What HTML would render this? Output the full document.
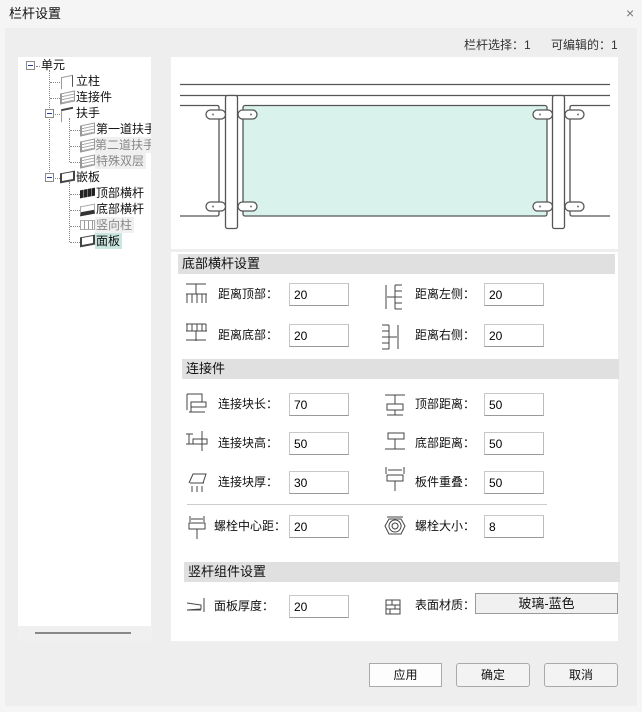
<!DOCTYPE html>
<html><head><meta charset="utf-8"><style>
*{margin:0;padding:0;box-sizing:border-box}
body{width:642px;height:712px;background:#f5f5f5;font-family:"Liberation Sans","Noto Sans CJK SC",sans-serif;font-size:12px;color:#111;position:relative;overflow:hidden}
.a{position:absolute}
.t{white-space:nowrap;line-height:16px}
.inp{position:absolute;width:60px;height:23px;background:#fff;border:1px solid #c8c8c8;border-bottom-color:#999;border-right-color:#bbb;font-size:12px;padding:3px 0 0 4px;line-height:16px;color:#000}
.hd{position:absolute;height:20px;background:#e0e0e0;font-size:13px;line-height:20px;padding-left:4px}
.btn{position:absolute;height:24px;border:1px solid #aaa;border-radius:3px;background:#f3f3f3;text-align:center;line-height:22px;font-size:12px}
.box{position:absolute;width:9px;height:9px;border:1px solid #8a8a8a;background:#fff}
.box:after{content:"";position:absolute;left:1px;top:3px;width:5px;height:1px;background:#2a3a9a}
.dv{position:absolute;border-left:1px dotted #888}
.dh{position:absolute;border-top:1px dotted #888;height:0}
.ic{position:absolute;width:15px;height:11px;border:1px solid #999;border-left-width:2px;background:repeating-linear-gradient(180deg,#fff 0 2px,#aaa 2px 3px);transform:skewY(-12deg)}
</style></head><body>
<div class="a t" style="left:9px;top:6px;font-size:13px">栏杆设置</div>
<div class="a t" style="left:626px;top:5px;font-size:14px;color:#777">×</div>
<div class="a" style="left:5px;top:28px;width:632px;height:678px;background:#eeeeee"></div>
<div class="a t" style="left:464px;top:37px;color:#333">栏杆选择：1</div>
<div class="a t" style="left:551px;top:37px;color:#333">可编辑的：1</div>

<!-- tree -->
<div class="a" style="left:18px;top:626px;width:134px;height:15px;background:#f0f0f0"></div>
<div class="a" style="left:35px;top:632px;width:96px;height:2px;background:#888"></div>
<div class="a" style="left:18px;top:57px;width:133px;height:569px;background:#fff;overflow:hidden">
<div class="a" style="left:-18px;top:-57px;width:200px;height:700px">
<div class="dv" style="left:49px;top:70px;height:108px"></div>
<div class="dv" style="left:69px;top:118px;height:44px"></div>
<div class="dv" style="left:69px;top:182px;height:60px"></div>
<div class="box" style="left:26px;top:61px"></div>
<div class="dh" style="left:36px;top:66px;width:4px"></div>
<div class="a t" style="left:41px;top:57px">单元</div>
<div class="dh" style="left:50px;top:82px;width:10px"></div>
<div class="a" style="left:61px;top:76px;width:12px;height:12px;border-left:1px solid #999;border-top:1px solid #999;border-right:1px solid #555;transform:skewY(-12deg)"></div>
<div class="a t" style="left:76px;top:73px">立柱</div>
<div class="dh" style="left:50px;top:98px;width:10px"></div>
<div class="ic" style="left:60px;top:92px"></div>
<div class="a t" style="left:76px;top:89px">连接件</div>
<div class="box" style="left:45px;top:109px"></div>
<div class="dh" style="left:55px;top:114px;width:5px"></div>
<div class="a" style="left:61px;top:108px;width:12px;height:13px;border-left:1px solid #999;border-top:2px solid #444;transform:skewY(-12deg)"></div>
<div class="a t" style="left:76px;top:105px">扶手</div>
<div class="dh" style="left:70px;top:130px;width:10px"></div>
<div class="ic" style="left:80px;top:124px"></div>
<div class="a t" style="left:96px;top:121px">第一道扶手</div>
<div class="dh" style="left:70px;top:146px;width:10px"></div>
<div class="ic" style="left:80px;top:140px"></div>
<div class="a t" style="left:95px;top:137px;color:#888;background:#f0f0f0;padding-right:2px">第二道扶手</div>
<div class="dh" style="left:70px;top:162px;width:10px"></div>
<div class="ic" style="left:80px;top:156px"></div>
<div class="a t" style="left:95px;top:153px;color:#888;background:#f0f0f0;padding:0 2px 0 1px">特殊双层</div>
<div class="box" style="left:45px;top:173px"></div>
<div class="dh" style="left:55px;top:178px;width:5px"></div>
<div class="a" style="left:60px;top:172px;width:15px;height:10px;border:2px solid #444;border-top-width:1px;background:#fff;transform:skewY(-10deg)"></div>
<div class="a t" style="left:76px;top:169px">嵌板</div>
<div class="dh" style="left:70px;top:194px;width:10px"></div>
<div class="a" style="left:80px;top:189px;width:15px;height:8px;background:repeating-linear-gradient(90deg,#222 0 3px,#777 3px 4px);transform:skewY(-10deg)"></div>
<div class="a t" style="left:96px;top:185px">顶部横杆</div>
<div class="dh" style="left:70px;top:210px;width:10px"></div>
<div class="a" style="left:80px;top:205px;width:15px;height:10px;border:1px solid #aaa;border-bottom:4px solid #333;transform:skewY(-10deg)"></div>
<div class="a t" style="left:96px;top:201px">底部横杆</div>
<div class="dh" style="left:70px;top:226px;width:10px"></div>
<div class="a" style="left:80px;top:220px;width:15px;height:10px;border:1px solid #aaa;background:repeating-linear-gradient(90deg,#fff 0 3px,#999 3px 4px)"></div>
<div class="a t" style="left:95px;top:217px;color:#888;background:#f0f0f0;padding:0 2px 0 1px">竖向柱</div>
<div class="dh" style="left:70px;top:242px;width:10px"></div>
<div class="a" style="left:80px;top:236px;width:15px;height:10px;border:2px solid #444;border-top-width:1px;background:#fff;transform:skewY(-10deg)"></div>
<div class="a t" style="left:95px;top:233px;background:#c9e6df;padding:0 2px 0 1px">面板</div>
</div></div>

<!-- right panel -->
<div class="a" style="left:171px;top:57px;width:447px;height:584px;background:#fff"></div>
<div class="a" style="left:171px;top:249px;width:447px;height:3px;background:#eeeeee"></div>
<svg class="a" style="left:171px;top:57px" width="447" height="192">
<g fill="none" stroke="#555" stroke-width="1.3">
<line x1="9" y1="27.5" x2="439" y2="27.5"/>
<line x1="9" y1="38.5" x2="439" y2="38.5"/>
<path d="M9 48.5H46q2 0 2 2V157q0 2-2 2H9"/>
<path d="M439 48.5H401q-2 0-2 2V157q0 2 2 2H439"/>
<rect x="72" y="48.5" width="304" height="110.5" rx="2" fill="#d9f3ec"/>
<rect x="54.5" y="38.5" width="12" height="133" rx="2" fill="#fff"/>
<rect x="381.5" y="38.5" width="12" height="133" rx="2" fill="#fff"/>
<rect x="35" y="53" width="19.5" height="9" rx="4.5" fill="#fff"/>
<rect x="67" y="53" width="19" height="9" rx="4.5" fill="#fff"/>
<rect x="35" y="145" width="19.5" height="9" rx="4.5" fill="#fff"/>
<rect x="67" y="145" width="19" height="9" rx="4.5" fill="#fff"/>
<rect x="362" y="53" width="19.5" height="9" rx="4.5" fill="#fff"/>
<rect x="394" y="53" width="19" height="9" rx="4.5" fill="#fff"/>
<rect x="362" y="145" width="19.5" height="9" rx="4.5" fill="#fff"/>
<rect x="394" y="145" width="19" height="9" rx="4.5" fill="#fff"/>
</g>
<g fill="#777"><circle cx="42" cy="57.5" r="1"/><circle cx="80" cy="57.5" r="1"/><circle cx="42" cy="149.5" r="1"/><circle cx="80" cy="149.5" r="1"/><circle cx="369" cy="57.5" r="1"/><circle cx="407" cy="57.5" r="1"/><circle cx="369" cy="149.5" r="1"/><circle cx="407" cy="149.5" r="1"/></g>
</svg>

<div class="hd" style="left:178px;top:254px;width:437px">底部横杆设置</div>
<div class="hd" style="left:182px;top:359px;width:437px">连接件</div>
<div class="hd" style="left:184px;top:562px;width:436px">竖杆组件设置</div>

<svg class="a" style="left:185px;top:280px" width="400" height="340" fill="none" stroke="#444" stroke-width="1">
<path d="M1 4h20M11 4v10M1 14h21M2 14v9M7 14v9M12 14v9M17 14v9M21 14v9"/>
<path d="M1 44h20M2 44v7M7 44v7M12 44v7M17 44v7M21 44v7M1 51h21M11 51v10M1 60h20"/>
<path d="M201 5v24M202 17h8M210 5v24M210 5h7M210 11h7M210 17h7M210 23h7M210 29h7"/>
<path d="M197 45h7M197 51h7M197 57h7M197 63h7M197 69h7M204 45v24M204 57h8M213 45v24"/>
<path d="M2 114h15v8H6v10M2 114v16M6 122v5h15v-5h-4M4 132h16"/>
<path d="M1 154h7M1 164h7M4 154v10M8 159h14v5H8zM17 151v20"/>
<path d="M4 203l4-9h13l-3 9M5 203h14M7 206v6M12 206v6M17 206v6"/>
<path d="M200 115h20M210 115v9M202 124h16v6h-16zM210 130v5M202 135h16"/>
<path d="M203 153h16v6h-16zM210 159v10M200 169h20"/>
<path d="M201 187v7M219 187v7M203 190h14M202 195h16v6h-16zM210 201v10"/>
<path d="M5 236v6M19 236v6M6 239h12M4 243h16v6H4zM12 249v10"/>
<path d="M202 237h16M200 246l4-7h12l4 7-4 8h-12zM210 240a6 6 0 1 0 0.1 0M210 243a3 3 0 1 0 0.1 0"/>
<path d="M2 323l14 2v4l-14 1M2 330h14M19 318v14"/>
<path d="M201 320h14v14h-14zM201 325h14M201 329h14M207 320v5M210 325v4M205 329v5"/>
</svg>

<div class="a t" style="left:218px;top:286px">距离顶部：</div>
<div class="inp" style="left:289px;top:283px">20</div>
<div class="a t" style="left:415px;top:286px">距离左侧：</div>
<div class="inp" style="left:484px;top:283px">20</div>
<div class="a t" style="left:218px;top:327px">距离底部：</div>
<div class="inp" style="left:289px;top:324px">20</div>
<div class="a t" style="left:415px;top:327px">距离右侧：</div>
<div class="inp" style="left:484px;top:324px">20</div>

<div class="a t" style="left:218px;top:396px">连接块长：</div>
<div class="inp" style="left:289px;top:393px">70</div>
<div class="a t" style="left:415px;top:396px">顶部距离：</div>
<div class="inp" style="left:484px;top:393px">50</div>
<div class="a t" style="left:218px;top:435px">连接块高：</div>
<div class="inp" style="left:289px;top:432px">50</div>
<div class="a t" style="left:415px;top:435px">底部距离：</div>
<div class="inp" style="left:484px;top:432px">50</div>
<div class="a t" style="left:218px;top:474px">连接块厚：</div>
<div class="inp" style="left:289px;top:471px">30</div>
<div class="a t" style="left:415px;top:474px">板件重叠：</div>
<div class="inp" style="left:484px;top:471px">50</div>
<div class="a" style="left:187px;top:504px;width:360px;height:1px;background:#ccc"></div>
<div class="a t" style="left:214px;top:518px">螺栓中心距：</div>
<div class="inp" style="left:289px;top:515px">20</div>
<div class="a t" style="left:415px;top:518px">螺栓大小：</div>
<div class="inp" style="left:484px;top:515px">8</div>

<div class="a t" style="left:214px;top:598px">面板厚度：</div>
<div class="inp" style="left:289px;top:595px">20</div>
<div class="a t" style="left:415px;top:597px">表面材质：</div>
<div class="a" style="left:475px;top:593px;width:143px;height:21px;border:1px solid #999;background:#f0f0f0;text-align:center;line-height:19px;font-size:13px">玻璃-蓝色</div>

<div class="btn" style="left:369px;top:663px;width:73px;border-radius:0;background:#fdfdfd">应用</div>
<div class="btn" style="left:456px;top:663px;width:74px">确定</div>
<div class="btn" style="left:544px;top:663px;width:74px">取消</div>
</body></html>
